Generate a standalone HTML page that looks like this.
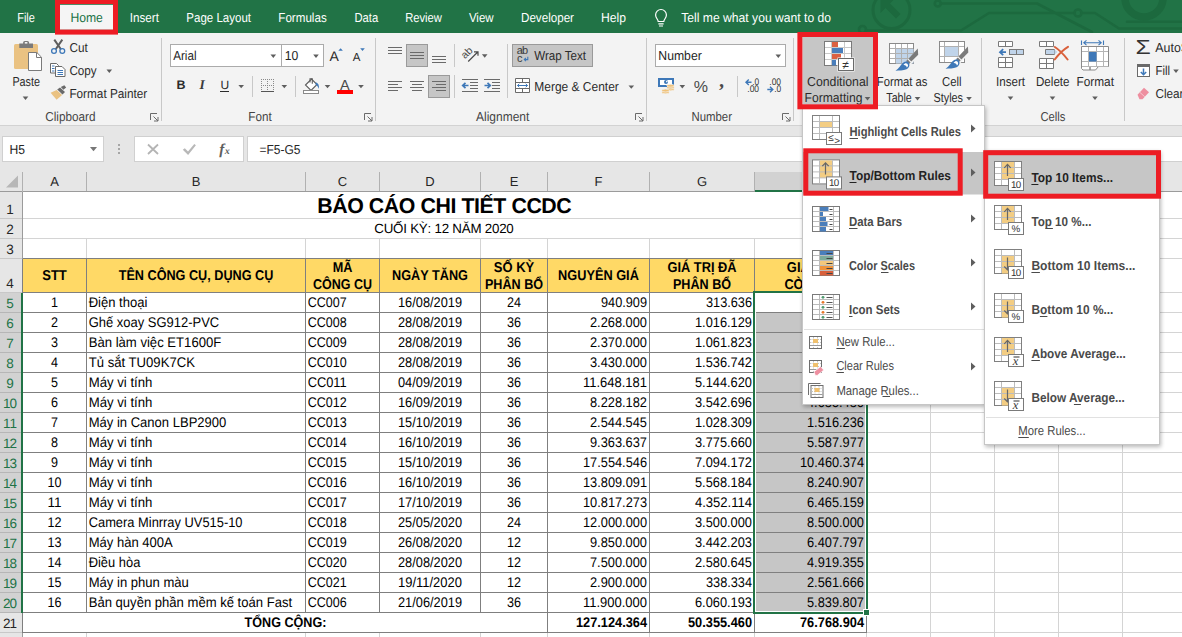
<!DOCTYPE html>
<html lang="vi"><head><meta charset="utf-8"><title>Excel - Conditional Formatting - Top 10 Items</title>
<style>
html,body{margin:0;padding:0;background:#fff;}
body{width:1182px;height:637px;overflow:hidden;font-family:"Liberation Sans",sans-serif;}
svg{display:block;}
svg text{white-space:pre;}
</style></head><body>
<svg width="1182" height="637" viewBox="0 0 1182 637" font-family="'Liberation Sans', sans-serif" text-rendering="geometricPrecision" role="img" aria-label="Excel worksheet with Conditional Formatting menu">
<g id="sheet">
<rect x="0" y="171" width="1182" height="466" fill="#ffffff"/>
<rect x="0" y="162" width="1182" height="30" fill="#e6e6e6"/>
<rect x="23" y="218" width="1159" height="1" fill="#d4d4d4"/>
<rect x="23" y="238" width="1159" height="1" fill="#d4d4d4"/>
<rect x="23" y="258" width="1159" height="1" fill="#d4d4d4"/>
<rect x="23" y="292" width="1159" height="1" fill="#d4d4d4"/>
<rect x="23" y="312" width="1159" height="1" fill="#d4d4d4"/>
<rect x="23" y="332" width="1159" height="1" fill="#d4d4d4"/>
<rect x="23" y="352" width="1159" height="1" fill="#d4d4d4"/>
<rect x="23" y="372" width="1159" height="1" fill="#d4d4d4"/>
<rect x="23" y="392" width="1159" height="1" fill="#d4d4d4"/>
<rect x="23" y="412" width="1159" height="1" fill="#d4d4d4"/>
<rect x="23" y="432" width="1159" height="1" fill="#d4d4d4"/>
<rect x="23" y="452" width="1159" height="1" fill="#d4d4d4"/>
<rect x="23" y="472" width="1159" height="1" fill="#d4d4d4"/>
<rect x="23" y="492" width="1159" height="1" fill="#d4d4d4"/>
<rect x="23" y="512" width="1159" height="1" fill="#d4d4d4"/>
<rect x="23" y="532" width="1159" height="1" fill="#d4d4d4"/>
<rect x="23" y="552" width="1159" height="1" fill="#d4d4d4"/>
<rect x="23" y="572" width="1159" height="1" fill="#d4d4d4"/>
<rect x="23" y="592" width="1159" height="1" fill="#d4d4d4"/>
<rect x="23" y="612" width="1159" height="1" fill="#d4d4d4"/>
<rect x="23" y="632" width="1159" height="1" fill="#d4d4d4"/>
<rect x="86" y="192" width="1" height="445" fill="#d4d4d4"/>
<rect x="305" y="192" width="1" height="445" fill="#d4d4d4"/>
<rect x="379" y="192" width="1" height="445" fill="#d4d4d4"/>
<rect x="480" y="192" width="1" height="445" fill="#d4d4d4"/>
<rect x="547" y="192" width="1" height="445" fill="#d4d4d4"/>
<rect x="649" y="192" width="1" height="445" fill="#d4d4d4"/>
<rect x="754" y="192" width="1" height="445" fill="#d4d4d4"/>
<rect x="866" y="192" width="1" height="445" fill="#d4d4d4"/>
<rect x="930" y="192" width="1" height="445" fill="#d4d4d4"/>
<rect x="994" y="192" width="1" height="445" fill="#d4d4d4"/>
<rect x="1058" y="192" width="1" height="445" fill="#d4d4d4"/>
<rect x="1122" y="192" width="1" height="445" fill="#d4d4d4"/>
<rect x="23" y="192" width="843" height="26" fill="#fff"/>
<rect x="23" y="219" width="843" height="19" fill="#fff"/>
<rect x="23" y="613" width="524" height="19" fill="#fff"/>
<rect x="0" y="191" width="1182" height="1" fill="#9b9b9b"/>
<rect x="86" y="172" width="1" height="19" fill="#b1b1b1"/>
<rect x="305" y="172" width="1" height="19" fill="#b1b1b1"/>
<rect x="379" y="172" width="1" height="19" fill="#b1b1b1"/>
<rect x="480" y="172" width="1" height="19" fill="#b1b1b1"/>
<rect x="547" y="172" width="1" height="19" fill="#b1b1b1"/>
<rect x="649" y="172" width="1" height="19" fill="#b1b1b1"/>
<rect x="754" y="172" width="1" height="19" fill="#b1b1b1"/>
<rect x="866" y="172" width="1" height="19" fill="#b1b1b1"/>
<rect x="930" y="172" width="1" height="19" fill="#b1b1b1"/>
<rect x="994" y="172" width="1" height="19" fill="#b1b1b1"/>
<rect x="1058" y="172" width="1" height="19" fill="#b1b1b1"/>
<rect x="1122" y="172" width="1" height="19" fill="#b1b1b1"/>
<rect x="755" y="172" width="111" height="18" fill="#d2d2d2"/>
<rect x="755" y="190" width="112" height="2" fill="#217346"/>
<text x="54.5" y="186" font-size="13" fill="#262626" text-anchor="middle">A</text>
<text x="196" y="186" font-size="13" fill="#262626" text-anchor="middle">B</text>
<text x="342.5" y="186" font-size="13" fill="#262626" text-anchor="middle">C</text>
<text x="430" y="186" font-size="13" fill="#262626" text-anchor="middle">D</text>
<text x="514" y="186" font-size="13" fill="#262626" text-anchor="middle">E</text>
<text x="598.5" y="186" font-size="13" fill="#262626" text-anchor="middle">F</text>
<text x="702" y="186" font-size="13" fill="#262626" text-anchor="middle">G</text>
<text x="898.5" y="186" font-size="13" fill="#262626" text-anchor="middle">I</text>
<text x="962.5" y="186" font-size="13" fill="#262626" text-anchor="middle">J</text>
<text x="1026.5" y="186" font-size="13" fill="#262626" text-anchor="middle">K</text>
<text x="1090.5" y="186" font-size="13" fill="#262626" text-anchor="middle">L</text>
<text x="1154.5" y="186" font-size="13" fill="#262626" text-anchor="middle">M</text>
<rect x="22" y="172" width="1" height="20" fill="#b1b1b1"/>
<path d="M18 175.5V187.5H6z" fill="#b7b7b7"/>
<rect x="0" y="192" width="22" height="445" fill="#e6e6e6"/>
<rect x="22" y="192" width="1" height="445" fill="#9b9b9b"/>
<rect x="0" y="218" width="22" height="1" fill="#c8c8c8"/>
<rect x="0" y="238" width="22" height="1" fill="#c8c8c8"/>
<rect x="0" y="258" width="22" height="1" fill="#c8c8c8"/>
<rect x="0" y="292" width="22" height="1" fill="#c8c8c8"/>
<rect x="0" y="312" width="22" height="1" fill="#c8c8c8"/>
<rect x="0" y="332" width="22" height="1" fill="#c8c8c8"/>
<rect x="0" y="352" width="22" height="1" fill="#c8c8c8"/>
<rect x="0" y="372" width="22" height="1" fill="#c8c8c8"/>
<rect x="0" y="392" width="22" height="1" fill="#c8c8c8"/>
<rect x="0" y="412" width="22" height="1" fill="#c8c8c8"/>
<rect x="0" y="432" width="22" height="1" fill="#c8c8c8"/>
<rect x="0" y="452" width="22" height="1" fill="#c8c8c8"/>
<rect x="0" y="472" width="22" height="1" fill="#c8c8c8"/>
<rect x="0" y="492" width="22" height="1" fill="#c8c8c8"/>
<rect x="0" y="512" width="22" height="1" fill="#c8c8c8"/>
<rect x="0" y="532" width="22" height="1" fill="#c8c8c8"/>
<rect x="0" y="552" width="22" height="1" fill="#c8c8c8"/>
<rect x="0" y="572" width="22" height="1" fill="#c8c8c8"/>
<rect x="0" y="592" width="22" height="1" fill="#c8c8c8"/>
<rect x="0" y="612" width="22" height="1" fill="#c8c8c8"/>
<rect x="0" y="632" width="22" height="1" fill="#c8c8c8"/>
<rect x="0" y="293" width="21" height="319" fill="#d2d2d2"/>
<rect x="0" y="312" width="21" height="1" fill="#b6b6b6"/>
<rect x="0" y="332" width="21" height="1" fill="#b6b6b6"/>
<rect x="0" y="352" width="21" height="1" fill="#b6b6b6"/>
<rect x="0" y="372" width="21" height="1" fill="#b6b6b6"/>
<rect x="0" y="392" width="21" height="1" fill="#b6b6b6"/>
<rect x="0" y="412" width="21" height="1" fill="#b6b6b6"/>
<rect x="0" y="432" width="21" height="1" fill="#b6b6b6"/>
<rect x="0" y="452" width="21" height="1" fill="#b6b6b6"/>
<rect x="0" y="472" width="21" height="1" fill="#b6b6b6"/>
<rect x="0" y="492" width="21" height="1" fill="#b6b6b6"/>
<rect x="0" y="512" width="21" height="1" fill="#b6b6b6"/>
<rect x="0" y="532" width="21" height="1" fill="#b6b6b6"/>
<rect x="0" y="552" width="21" height="1" fill="#b6b6b6"/>
<rect x="0" y="572" width="21" height="1" fill="#b6b6b6"/>
<rect x="0" y="592" width="21" height="1" fill="#b6b6b6"/>
<rect x="0" y="612" width="21" height="1" fill="#b6b6b6"/>
<rect x="21" y="293" width="2" height="320" fill="#217346"/>
<text x="9.9" y="214" font-size="13.5" fill="#262626" text-anchor="middle">1</text>
<text x="9.9" y="234" font-size="13.5" fill="#262626" text-anchor="middle">2</text>
<text x="9.9" y="254" font-size="13.5" fill="#262626" text-anchor="middle">3</text>
<text x="9.9" y="288" font-size="13.5" fill="#262626" text-anchor="middle">4</text>
<text x="9.9" y="308" font-size="13.5" fill="#217346" text-anchor="middle">5</text>
<text x="9.9" y="328" font-size="13.5" fill="#217346" text-anchor="middle">6</text>
<text x="9.9" y="348" font-size="13.5" fill="#217346" text-anchor="middle">7</text>
<text x="9.9" y="368" font-size="13.5" fill="#217346" text-anchor="middle">8</text>
<text x="9.9" y="388" font-size="13.5" fill="#217346" text-anchor="middle">9</text>
<text x="9.9" y="408" font-size="13.5" fill="#217346" text-anchor="middle" textLength="14" lengthAdjust="spacing">10</text>
<text x="9.9" y="428" font-size="13.5" fill="#217346" text-anchor="middle" textLength="14" lengthAdjust="spacing">11</text>
<text x="9.9" y="448" font-size="13.5" fill="#217346" text-anchor="middle" textLength="14" lengthAdjust="spacing">12</text>
<text x="9.9" y="468" font-size="13.5" fill="#217346" text-anchor="middle" textLength="14" lengthAdjust="spacing">13</text>
<text x="9.9" y="488" font-size="13.5" fill="#217346" text-anchor="middle" textLength="14" lengthAdjust="spacing">14</text>
<text x="9.9" y="508" font-size="13.5" fill="#217346" text-anchor="middle" textLength="14" lengthAdjust="spacing">15</text>
<text x="9.9" y="528" font-size="13.5" fill="#217346" text-anchor="middle" textLength="14" lengthAdjust="spacing">16</text>
<text x="9.9" y="548" font-size="13.5" fill="#217346" text-anchor="middle" textLength="14" lengthAdjust="spacing">17</text>
<text x="9.9" y="568" font-size="13.5" fill="#217346" text-anchor="middle" textLength="14" lengthAdjust="spacing">18</text>
<text x="9.9" y="588" font-size="13.5" fill="#217346" text-anchor="middle" textLength="14" lengthAdjust="spacing">19</text>
<text x="9.9" y="608" font-size="13.5" fill="#217346" text-anchor="middle" textLength="14" lengthAdjust="spacing">20</text>
<text x="9.9" y="628" font-size="13.5" fill="#262626" text-anchor="middle" textLength="14" lengthAdjust="spacing">21</text>
<rect x="23" y="259" width="844" height="33" fill="#ffd966"/>
<rect x="756" y="313" width="109" height="298" fill="#c6c6c6"/>
<rect x="23" y="258" width="844" height="1" fill="#7f7f7f"/>
<rect x="23" y="292" width="844" height="1" fill="#7f7f7f"/>
<rect x="23" y="312" width="844" height="1" fill="#7f7f7f"/>
<rect x="23" y="332" width="844" height="1" fill="#7f7f7f"/>
<rect x="23" y="352" width="844" height="1" fill="#7f7f7f"/>
<rect x="23" y="372" width="844" height="1" fill="#7f7f7f"/>
<rect x="23" y="392" width="844" height="1" fill="#7f7f7f"/>
<rect x="23" y="412" width="844" height="1" fill="#7f7f7f"/>
<rect x="23" y="432" width="844" height="1" fill="#7f7f7f"/>
<rect x="23" y="452" width="844" height="1" fill="#7f7f7f"/>
<rect x="23" y="472" width="844" height="1" fill="#7f7f7f"/>
<rect x="23" y="492" width="844" height="1" fill="#7f7f7f"/>
<rect x="23" y="512" width="844" height="1" fill="#7f7f7f"/>
<rect x="23" y="532" width="844" height="1" fill="#7f7f7f"/>
<rect x="23" y="552" width="844" height="1" fill="#7f7f7f"/>
<rect x="23" y="572" width="844" height="1" fill="#7f7f7f"/>
<rect x="23" y="592" width="844" height="1" fill="#7f7f7f"/>
<rect x="23" y="612" width="844" height="1" fill="#7f7f7f"/>
<rect x="23" y="632" width="844" height="1" fill="#7f7f7f"/>
<rect x="86" y="259" width="1" height="354" fill="#7f7f7f"/>
<rect x="305" y="259" width="1" height="354" fill="#7f7f7f"/>
<rect x="379" y="259" width="1" height="354" fill="#7f7f7f"/>
<rect x="480" y="259" width="1" height="354" fill="#7f7f7f"/>
<rect x="547" y="259" width="1" height="354" fill="#7f7f7f"/>
<rect x="649" y="259" width="1" height="354" fill="#7f7f7f"/>
<rect x="754" y="259" width="1" height="354" fill="#7f7f7f"/>
<rect x="866" y="259" width="1" height="354" fill="#7f7f7f"/>
<rect x="547" y="613" width="1" height="20" fill="#7f7f7f"/>
<rect x="649" y="613" width="1" height="20" fill="#7f7f7f"/>
<rect x="754" y="613" width="1" height="20" fill="#7f7f7f"/>
<rect x="866" y="613" width="1" height="20" fill="#7f7f7f"/>
<rect x="22" y="259" width="1" height="374" fill="#7f7f7f"/>
<rect x="21" y="293" width="2" height="320" fill="#217346"/>
<text x="54.5" y="307" font-size="14" fill="#000" text-anchor="middle" textLength="7" lengthAdjust="spacingAndGlyphs">1</text>
<text x="88.7" y="307" font-size="14" fill="#000" textLength="58.696" lengthAdjust="spacingAndGlyphs">Điện thoại</text>
<text x="307.7" y="307" font-size="14" fill="#000" textLength="39" lengthAdjust="spacingAndGlyphs">CC007</text>
<text x="430" y="307" font-size="14" fill="#000" text-anchor="middle" textLength="64" lengthAdjust="spacingAndGlyphs">16/08/2019</text>
<text x="514" y="307" font-size="14" fill="#000" text-anchor="middle" textLength="14" lengthAdjust="spacingAndGlyphs">24</text>
<text x="647" y="307" font-size="14" fill="#000" text-anchor="end" textLength="46" lengthAdjust="spacingAndGlyphs">940.909</text>
<text x="752" y="307" font-size="14" fill="#000" text-anchor="end" textLength="46" lengthAdjust="spacingAndGlyphs">313.636</text>
<text x="864" y="307" font-size="14" fill="#000" text-anchor="end" textLength="46" lengthAdjust="spacingAndGlyphs">627.273</text>
<text x="54.5" y="327" font-size="14" fill="#000" text-anchor="middle" textLength="7" lengthAdjust="spacingAndGlyphs">2</text>
<text x="88.7" y="327" font-size="14" fill="#000" textLength="130.548" lengthAdjust="spacingAndGlyphs">Ghế xoay SG912-PVC</text>
<text x="307.7" y="327" font-size="14" fill="#000" textLength="39" lengthAdjust="spacingAndGlyphs">CC008</text>
<text x="430" y="327" font-size="14" fill="#000" text-anchor="middle" textLength="64" lengthAdjust="spacingAndGlyphs">28/08/2019</text>
<text x="514" y="327" font-size="14" fill="#000" text-anchor="middle" textLength="14" lengthAdjust="spacingAndGlyphs">36</text>
<text x="647" y="327" font-size="14" fill="#000" text-anchor="end" textLength="57" lengthAdjust="spacingAndGlyphs">2.268.000</text>
<text x="752" y="327" font-size="14" fill="#000" text-anchor="end" textLength="57" lengthAdjust="spacingAndGlyphs">1.016.129</text>
<text x="864" y="327" font-size="14" fill="#000" text-anchor="end" textLength="57" lengthAdjust="spacingAndGlyphs">1.251.871</text>
<text x="54.5" y="347" font-size="14" fill="#000" text-anchor="middle" textLength="7" lengthAdjust="spacingAndGlyphs">3</text>
<text x="88.7" y="347" font-size="14" fill="#000" textLength="132.572" lengthAdjust="spacingAndGlyphs">Bàn làm việc ET1600F</text>
<text x="307.7" y="347" font-size="14" fill="#000" textLength="39" lengthAdjust="spacingAndGlyphs">CC009</text>
<text x="430" y="347" font-size="14" fill="#000" text-anchor="middle" textLength="64" lengthAdjust="spacingAndGlyphs">28/08/2019</text>
<text x="514" y="347" font-size="14" fill="#000" text-anchor="middle" textLength="14" lengthAdjust="spacingAndGlyphs">36</text>
<text x="647" y="347" font-size="14" fill="#000" text-anchor="end" textLength="57" lengthAdjust="spacingAndGlyphs">2.370.000</text>
<text x="752" y="347" font-size="14" fill="#000" text-anchor="end" textLength="57" lengthAdjust="spacingAndGlyphs">1.061.823</text>
<text x="864" y="347" font-size="14" fill="#000" text-anchor="end" textLength="57" lengthAdjust="spacingAndGlyphs">1.308.177</text>
<text x="54.5" y="367" font-size="14" fill="#000" text-anchor="middle" textLength="7" lengthAdjust="spacingAndGlyphs">4</text>
<text x="88.7" y="367" font-size="14" fill="#000" textLength="106.26" lengthAdjust="spacingAndGlyphs">Tủ sắt TU09K7CK</text>
<text x="307.7" y="367" font-size="14" fill="#000" textLength="39" lengthAdjust="spacingAndGlyphs">CC010</text>
<text x="430" y="367" font-size="14" fill="#000" text-anchor="middle" textLength="64" lengthAdjust="spacingAndGlyphs">28/08/2019</text>
<text x="514" y="367" font-size="14" fill="#000" text-anchor="middle" textLength="14" lengthAdjust="spacingAndGlyphs">36</text>
<text x="647" y="367" font-size="14" fill="#000" text-anchor="end" textLength="57" lengthAdjust="spacingAndGlyphs">3.430.000</text>
<text x="752" y="367" font-size="14" fill="#000" text-anchor="end" textLength="57" lengthAdjust="spacingAndGlyphs">1.536.742</text>
<text x="864" y="367" font-size="14" fill="#000" text-anchor="end" textLength="57" lengthAdjust="spacingAndGlyphs">1.893.258</text>
<text x="54.5" y="387" font-size="14" fill="#000" text-anchor="middle" textLength="7" lengthAdjust="spacingAndGlyphs">5</text>
<text x="88.7" y="387" font-size="14" fill="#000" textLength="63.756" lengthAdjust="spacingAndGlyphs">Máy vi tính</text>
<text x="307.7" y="387" font-size="14" fill="#000" textLength="39" lengthAdjust="spacingAndGlyphs">CC011</text>
<text x="430" y="387" font-size="14" fill="#000" text-anchor="middle" textLength="64" lengthAdjust="spacingAndGlyphs">04/09/2019</text>
<text x="514" y="387" font-size="14" fill="#000" text-anchor="middle" textLength="14" lengthAdjust="spacingAndGlyphs">36</text>
<text x="647" y="387" font-size="14" fill="#000" text-anchor="end" textLength="64" lengthAdjust="spacingAndGlyphs">11.648.181</text>
<text x="752" y="387" font-size="14" fill="#000" text-anchor="end" textLength="57" lengthAdjust="spacingAndGlyphs">5.144.620</text>
<text x="864" y="387" font-size="14" fill="#000" text-anchor="end" textLength="57" lengthAdjust="spacingAndGlyphs">6.503.561</text>
<text x="54.5" y="407" font-size="14" fill="#000" text-anchor="middle" textLength="7" lengthAdjust="spacingAndGlyphs">6</text>
<text x="88.7" y="407" font-size="14" fill="#000" textLength="63.756" lengthAdjust="spacingAndGlyphs">Máy vi tính</text>
<text x="307.7" y="407" font-size="14" fill="#000" textLength="39" lengthAdjust="spacingAndGlyphs">CC012</text>
<text x="430" y="407" font-size="14" fill="#000" text-anchor="middle" textLength="64" lengthAdjust="spacingAndGlyphs">16/09/2019</text>
<text x="514" y="407" font-size="14" fill="#000" text-anchor="middle" textLength="14" lengthAdjust="spacingAndGlyphs">36</text>
<text x="647" y="407" font-size="14" fill="#000" text-anchor="end" textLength="57" lengthAdjust="spacingAndGlyphs">8.228.182</text>
<text x="752" y="407" font-size="14" fill="#000" text-anchor="end" textLength="57" lengthAdjust="spacingAndGlyphs">3.542.696</text>
<text x="864" y="407" font-size="14" fill="#000" text-anchor="end" textLength="57" lengthAdjust="spacingAndGlyphs">4.685.486</text>
<text x="54.5" y="427" font-size="14" fill="#000" text-anchor="middle" textLength="7" lengthAdjust="spacingAndGlyphs">7</text>
<text x="88.7" y="427" font-size="14" fill="#000" textLength="137.632" lengthAdjust="spacingAndGlyphs">Máy in Canon LBP2900</text>
<text x="307.7" y="427" font-size="14" fill="#000" textLength="39" lengthAdjust="spacingAndGlyphs">CC013</text>
<text x="430" y="427" font-size="14" fill="#000" text-anchor="middle" textLength="64" lengthAdjust="spacingAndGlyphs">15/10/2019</text>
<text x="514" y="427" font-size="14" fill="#000" text-anchor="middle" textLength="14" lengthAdjust="spacingAndGlyphs">36</text>
<text x="647" y="427" font-size="14" fill="#000" text-anchor="end" textLength="57" lengthAdjust="spacingAndGlyphs">2.544.545</text>
<text x="752" y="427" font-size="14" fill="#000" text-anchor="end" textLength="57" lengthAdjust="spacingAndGlyphs">1.028.309</text>
<text x="864" y="427" font-size="14" fill="#000" text-anchor="end" textLength="57" lengthAdjust="spacingAndGlyphs">1.516.236</text>
<text x="54.5" y="447" font-size="14" fill="#000" text-anchor="middle" textLength="7" lengthAdjust="spacingAndGlyphs">8</text>
<text x="88.7" y="447" font-size="14" fill="#000" textLength="63.756" lengthAdjust="spacingAndGlyphs">Máy vi tính</text>
<text x="307.7" y="447" font-size="14" fill="#000" textLength="39" lengthAdjust="spacingAndGlyphs">CC014</text>
<text x="430" y="447" font-size="14" fill="#000" text-anchor="middle" textLength="64" lengthAdjust="spacingAndGlyphs">16/10/2019</text>
<text x="514" y="447" font-size="14" fill="#000" text-anchor="middle" textLength="14" lengthAdjust="spacingAndGlyphs">36</text>
<text x="647" y="447" font-size="14" fill="#000" text-anchor="end" textLength="57" lengthAdjust="spacingAndGlyphs">9.363.637</text>
<text x="752" y="447" font-size="14" fill="#000" text-anchor="end" textLength="57" lengthAdjust="spacingAndGlyphs">3.775.660</text>
<text x="864" y="447" font-size="14" fill="#000" text-anchor="end" textLength="57" lengthAdjust="spacingAndGlyphs">5.587.977</text>
<text x="54.5" y="467" font-size="14" fill="#000" text-anchor="middle" textLength="7" lengthAdjust="spacingAndGlyphs">9</text>
<text x="88.7" y="467" font-size="14" fill="#000" textLength="63.756" lengthAdjust="spacingAndGlyphs">Máy vi tính</text>
<text x="307.7" y="467" font-size="14" fill="#000" textLength="39" lengthAdjust="spacingAndGlyphs">CC015</text>
<text x="430" y="467" font-size="14" fill="#000" text-anchor="middle" textLength="64" lengthAdjust="spacingAndGlyphs">15/10/2019</text>
<text x="514" y="467" font-size="14" fill="#000" text-anchor="middle" textLength="14" lengthAdjust="spacingAndGlyphs">36</text>
<text x="647" y="467" font-size="14" fill="#000" text-anchor="end" textLength="64" lengthAdjust="spacingAndGlyphs">17.554.546</text>
<text x="752" y="467" font-size="14" fill="#000" text-anchor="end" textLength="57" lengthAdjust="spacingAndGlyphs">7.094.172</text>
<text x="864" y="467" font-size="14" fill="#000" text-anchor="end" textLength="64" lengthAdjust="spacingAndGlyphs">10.460.374</text>
<text x="54.5" y="487" font-size="14" fill="#000" text-anchor="middle" textLength="14" lengthAdjust="spacingAndGlyphs">10</text>
<text x="88.7" y="487" font-size="14" fill="#000" textLength="63.756" lengthAdjust="spacingAndGlyphs">Máy vi tính</text>
<text x="307.7" y="487" font-size="14" fill="#000" textLength="39" lengthAdjust="spacingAndGlyphs">CC016</text>
<text x="430" y="487" font-size="14" fill="#000" text-anchor="middle" textLength="64" lengthAdjust="spacingAndGlyphs">16/10/2019</text>
<text x="514" y="487" font-size="14" fill="#000" text-anchor="middle" textLength="14" lengthAdjust="spacingAndGlyphs">36</text>
<text x="647" y="487" font-size="14" fill="#000" text-anchor="end" textLength="64" lengthAdjust="spacingAndGlyphs">13.809.091</text>
<text x="752" y="487" font-size="14" fill="#000" text-anchor="end" textLength="57" lengthAdjust="spacingAndGlyphs">5.568.184</text>
<text x="864" y="487" font-size="14" fill="#000" text-anchor="end" textLength="57" lengthAdjust="spacingAndGlyphs">8.240.907</text>
<text x="54.5" y="507" font-size="14" fill="#000" text-anchor="middle" textLength="14" lengthAdjust="spacingAndGlyphs">11</text>
<text x="88.7" y="507" font-size="14" fill="#000" textLength="63.756" lengthAdjust="spacingAndGlyphs">Máy vi tính</text>
<text x="307.7" y="507" font-size="14" fill="#000" textLength="39" lengthAdjust="spacingAndGlyphs">CC017</text>
<text x="430" y="507" font-size="14" fill="#000" text-anchor="middle" textLength="64" lengthAdjust="spacingAndGlyphs">17/10/2019</text>
<text x="514" y="507" font-size="14" fill="#000" text-anchor="middle" textLength="14" lengthAdjust="spacingAndGlyphs">36</text>
<text x="647" y="507" font-size="14" fill="#000" text-anchor="end" textLength="64" lengthAdjust="spacingAndGlyphs">10.817.273</text>
<text x="752" y="507" font-size="14" fill="#000" text-anchor="end" textLength="57" lengthAdjust="spacingAndGlyphs">4.352.114</text>
<text x="864" y="507" font-size="14" fill="#000" text-anchor="end" textLength="57" lengthAdjust="spacingAndGlyphs">6.465.159</text>
<text x="54.5" y="527" font-size="14" fill="#000" text-anchor="middle" textLength="14" lengthAdjust="spacingAndGlyphs">12</text>
<text x="88.7" y="527" font-size="14" fill="#000" textLength="153.824" lengthAdjust="spacingAndGlyphs">Camera Minrray UV515-10</text>
<text x="307.7" y="527" font-size="14" fill="#000" textLength="39" lengthAdjust="spacingAndGlyphs">CC018</text>
<text x="430" y="527" font-size="14" fill="#000" text-anchor="middle" textLength="64" lengthAdjust="spacingAndGlyphs">25/05/2020</text>
<text x="514" y="527" font-size="14" fill="#000" text-anchor="middle" textLength="14" lengthAdjust="spacingAndGlyphs">24</text>
<text x="647" y="527" font-size="14" fill="#000" text-anchor="end" textLength="64" lengthAdjust="spacingAndGlyphs">12.000.000</text>
<text x="752" y="527" font-size="14" fill="#000" text-anchor="end" textLength="57" lengthAdjust="spacingAndGlyphs">3.500.000</text>
<text x="864" y="527" font-size="14" fill="#000" text-anchor="end" textLength="57" lengthAdjust="spacingAndGlyphs">8.500.000</text>
<text x="54.5" y="547" font-size="14" fill="#000" text-anchor="middle" textLength="14" lengthAdjust="spacingAndGlyphs">13</text>
<text x="88.7" y="547" font-size="14" fill="#000" textLength="83.996" lengthAdjust="spacingAndGlyphs">Máy hàn 400A</text>
<text x="307.7" y="547" font-size="14" fill="#000" textLength="39" lengthAdjust="spacingAndGlyphs">CC019</text>
<text x="430" y="547" font-size="14" fill="#000" text-anchor="middle" textLength="64" lengthAdjust="spacingAndGlyphs">26/08/2020</text>
<text x="514" y="547" font-size="14" fill="#000" text-anchor="middle" textLength="14" lengthAdjust="spacingAndGlyphs">12</text>
<text x="647" y="547" font-size="14" fill="#000" text-anchor="end" textLength="57" lengthAdjust="spacingAndGlyphs">9.850.000</text>
<text x="752" y="547" font-size="14" fill="#000" text-anchor="end" textLength="57" lengthAdjust="spacingAndGlyphs">3.442.203</text>
<text x="864" y="547" font-size="14" fill="#000" text-anchor="end" textLength="57" lengthAdjust="spacingAndGlyphs">6.407.797</text>
<text x="54.5" y="567" font-size="14" fill="#000" text-anchor="middle" textLength="14" lengthAdjust="spacingAndGlyphs">14</text>
<text x="88.7" y="567" font-size="14" fill="#000" textLength="51.612" lengthAdjust="spacingAndGlyphs">Điều hòa</text>
<text x="307.7" y="567" font-size="14" fill="#000" textLength="39" lengthAdjust="spacingAndGlyphs">CC020</text>
<text x="430" y="567" font-size="14" fill="#000" text-anchor="middle" textLength="64" lengthAdjust="spacingAndGlyphs">28/08/2020</text>
<text x="514" y="567" font-size="14" fill="#000" text-anchor="middle" textLength="14" lengthAdjust="spacingAndGlyphs">12</text>
<text x="647" y="567" font-size="14" fill="#000" text-anchor="end" textLength="57" lengthAdjust="spacingAndGlyphs">7.500.000</text>
<text x="752" y="567" font-size="14" fill="#000" text-anchor="end" textLength="57" lengthAdjust="spacingAndGlyphs">2.580.645</text>
<text x="864" y="567" font-size="14" fill="#000" text-anchor="end" textLength="57" lengthAdjust="spacingAndGlyphs">4.919.355</text>
<text x="54.5" y="587" font-size="14" fill="#000" text-anchor="middle" textLength="14" lengthAdjust="spacingAndGlyphs">15</text>
<text x="88.7" y="587" font-size="14" fill="#000" textLength="100.188" lengthAdjust="spacingAndGlyphs">Máy in phun màu</text>
<text x="307.7" y="587" font-size="14" fill="#000" textLength="39" lengthAdjust="spacingAndGlyphs">CC021</text>
<text x="430" y="587" font-size="14" fill="#000" text-anchor="middle" textLength="64" lengthAdjust="spacingAndGlyphs">19/11/2020</text>
<text x="514" y="587" font-size="14" fill="#000" text-anchor="middle" textLength="14" lengthAdjust="spacingAndGlyphs">12</text>
<text x="647" y="587" font-size="14" fill="#000" text-anchor="end" textLength="57" lengthAdjust="spacingAndGlyphs">2.900.000</text>
<text x="752" y="587" font-size="14" fill="#000" text-anchor="end" textLength="46" lengthAdjust="spacingAndGlyphs">338.334</text>
<text x="864" y="587" font-size="14" fill="#000" text-anchor="end" textLength="57" lengthAdjust="spacingAndGlyphs">2.561.666</text>
<text x="54.5" y="607" font-size="14" fill="#000" text-anchor="middle" textLength="14" lengthAdjust="spacingAndGlyphs">16</text>
<text x="88.7" y="607" font-size="14" fill="#000" textLength="203.412" lengthAdjust="spacingAndGlyphs">Bản quyền phần mềm kế toán Fast</text>
<text x="307.7" y="607" font-size="14" fill="#000" textLength="39" lengthAdjust="spacingAndGlyphs">CC006</text>
<text x="430" y="607" font-size="14" fill="#000" text-anchor="middle" textLength="64" lengthAdjust="spacingAndGlyphs">21/06/2019</text>
<text x="514" y="607" font-size="14" fill="#000" text-anchor="middle" textLength="14" lengthAdjust="spacingAndGlyphs">36</text>
<text x="647" y="607" font-size="14" fill="#000" text-anchor="end" textLength="64" lengthAdjust="spacingAndGlyphs">11.900.000</text>
<text x="752" y="607" font-size="14" fill="#000" text-anchor="end" textLength="57" lengthAdjust="spacingAndGlyphs">6.060.193</text>
<text x="864" y="607" font-size="14" fill="#000" text-anchor="end" textLength="57" lengthAdjust="spacingAndGlyphs">5.839.807</text>
<text x="647" y="627" font-size="14" fill="#000" text-anchor="end" font-weight="bold" textLength="71" lengthAdjust="spacingAndGlyphs">127.124.364</text>
<text x="752" y="627" font-size="14" fill="#000" text-anchor="end" font-weight="bold" textLength="64" lengthAdjust="spacingAndGlyphs">50.355.460</text>
<text x="864" y="627" font-size="14" fill="#000" text-anchor="end" font-weight="bold" textLength="64" lengthAdjust="spacingAndGlyphs">76.768.904</text>
<text x="285.5" y="627" font-size="14" fill="#000" text-anchor="middle" font-weight="bold" textLength="81.755" lengthAdjust="spacingAndGlyphs">TỔNG CỘNG:</text>
<text x="54.5" y="280" font-size="14.2" fill="#000" text-anchor="middle" font-weight="bold" textLength="24.625" lengthAdjust="spacingAndGlyphs">STT</text>
<text x="196" y="280" font-size="14.2" fill="#000" text-anchor="middle" font-weight="bold" textLength="154.645" lengthAdjust="spacingAndGlyphs">TÊN CÔNG CỤ, DỤNG CỤ</text>
<text x="342.5" y="271.7" font-size="14.2" fill="#000" text-anchor="middle" font-weight="bold" textLength="19.7" lengthAdjust="spacingAndGlyphs">MÃ</text>
<text x="342.5" y="288.7" font-size="14.2" fill="#000" text-anchor="middle" font-weight="bold" textLength="59.1" lengthAdjust="spacingAndGlyphs">CÔNG CỤ</text>
<text x="430" y="280" font-size="14.2" fill="#000" text-anchor="middle" font-weight="bold" textLength="75.845" lengthAdjust="spacingAndGlyphs">NGÀY TĂNG</text>
<text x="514" y="271.7" font-size="14.2" fill="#000" text-anchor="middle" font-weight="bold" textLength="40.385" lengthAdjust="spacingAndGlyphs">SỐ KỲ</text>
<text x="514" y="288.7" font-size="14.2" fill="#000" text-anchor="middle" font-weight="bold" textLength="58.115" lengthAdjust="spacingAndGlyphs">PHÂN BỔ</text>
<text x="598.5" y="280" font-size="14.2" fill="#000" text-anchor="middle" font-weight="bold" textLength="80.77" lengthAdjust="spacingAndGlyphs">NGUYÊN GIÁ</text>
<text x="702" y="271.7" font-size="14.2" fill="#000" text-anchor="middle" font-weight="bold" textLength="68.95" lengthAdjust="spacingAndGlyphs">GIÁ TRỊ ĐÃ</text>
<text x="702" y="288.7" font-size="14.2" fill="#000" text-anchor="middle" font-weight="bold" textLength="58.115" lengthAdjust="spacingAndGlyphs">PHÂN BỔ</text>
<text x="810.5" y="271.7" font-size="14.2" fill="#000" text-anchor="middle" font-weight="bold" textLength="47.28" lengthAdjust="spacingAndGlyphs">GIÁ TRỊ</text>
<text x="810.5" y="288.7" font-size="14.2" fill="#000" text-anchor="middle" font-weight="bold" textLength="52.205" lengthAdjust="spacingAndGlyphs">CÒN LẠI</text>
<text x="444.5" y="212.5" font-size="21.333" fill="#000" text-anchor="middle" font-weight="bold" textLength="254.5" lengthAdjust="spacing">BÁO CÁO CHI TIẾT CCDC</text>
<text x="444" y="233.3" font-size="13.333" fill="#000" text-anchor="middle" textLength="139.5" lengthAdjust="spacing">CUỐI KỲ: 12 NĂM 2020</text>
<rect x="755" y="293" width="1" height="319" fill="#fff"/>
<rect x="865" y="293" width="1" height="319" fill="#fff"/>
<rect x="755" y="293" width="111" height="1" fill="#fff"/>
<rect x="755" y="611" width="111" height="1" fill="#fff"/>
<rect x="753" y="291" width="2" height="323" fill="#217346"/>
<rect x="866" y="291" width="2" height="318" fill="#217346"/>
<rect x="753" y="291" width="115" height="2" fill="#217346"/>
<rect x="753" y="612" width="110" height="2" fill="#217346"/>
<rect x="863" y="609" width="7" height="7" fill="#fff"/>
<rect x="864" y="610" width="5" height="5" fill="#217346"/>
</g>
<g id="tabs">
<rect x="0" y="0" width="1182" height="33" fill="#217346"/>
<g fill="none" stroke="#1c693e" stroke-width="2.600" stroke-linecap="round" stroke-linejoin="round"><circle cx="891.500" cy="10" r="18.500" stroke-width="3"/><path d="M941 3.500H1037L1092 32M866.500 30.500H961L989 13H1074M1082 13H1095L1119 28.500H1182M1127 21.700H1182"/><circle cx="937.800" cy="3.500" r="3"/><circle cx="1078" cy="13" r="3.500"/><circle cx="862.500" cy="29.500" r="3.500"/><circle cx="1144" cy="-2" r="19" stroke-width="7.500"/></g>
<path d="M880.500 -1h14l-4.500 4.500 10.500 10.500-4.500 4.500-10.500-10.500-5 5z" fill="#1c693e"/>
<g fill="none" stroke="#fff" stroke-width="1.2"><path d="M658.2 21.5c0-2-2.6-3.4-2.6-6.6a5.4 5.4 0 0 1 10.8 0c0 3.2-2.6 4.6-2.6 6.600z"/><path d="M658.4 23.8h5.2M659 26h4"/></g>
</g>
<g id="ribbon">
<rect x="0" y="33" width="1182" height="92" fill="#f3f3f3"/>
<rect x="0" y="125" width="1182" height="1" fill="#d2d2d2"/>
<rect x="0" y="126" width="1182" height="36" fill="#e6e6e6"/>
<rect x="161" y="38" width="1" height="83" fill="#c8c8c8"/>
<rect x="375" y="38" width="1" height="83" fill="#c8c8c8"/>
<rect x="646" y="38" width="1" height="83" fill="#c8c8c8"/>
<rect x="793" y="38" width="1" height="83" fill="#c8c8c8"/>
<rect x="981" y="38" width="1" height="83" fill="#c8c8c8"/>
<rect x="1124" y="38" width="1" height="83" fill="#c8c8c8"/>
<text x="45.2" y="120.6" font-size="13" fill="#444444" textLength="50.3" lengthAdjust="spacingAndGlyphs">Clipboard</text>
<path d="M150.5 120.0V113.5H157.0M153.5 116.5L158.0 121.0M158.0 117.0V121.0H154.0" fill="none" stroke="#6a6a6a" stroke-width="1"/>
<text x="248.3" y="120.6" font-size="13" fill="#444444" textLength="23.4" lengthAdjust="spacingAndGlyphs">Font</text>
<path d="M364.5 120.0V113.5H371.0M367.5 116.5L372.0 121.0M372.0 117.0V121.0H368.0" fill="none" stroke="#6a6a6a" stroke-width="1"/>
<text x="476" y="120.6" font-size="13" fill="#444444" textLength="53.3" lengthAdjust="spacingAndGlyphs">Alignment</text>
<path d="M635.5 120.0V113.5H642.0M638.5 116.5L643.0 121.0M643.0 117.0V121.0H639.0" fill="none" stroke="#6a6a6a" stroke-width="1"/>
<text x="691.5" y="120.6" font-size="13" fill="#444444" textLength="40.5" lengthAdjust="spacingAndGlyphs">Number</text>
<path d="M782.5 120.0V113.5H789.0M785.5 116.5L790.0 121.0M790.0 117.0V121.0H786.0" fill="none" stroke="#6a6a6a" stroke-width="1"/>
<text x="1040.5" y="120.6" font-size="13" fill="#444444" textLength="25" lengthAdjust="spacingAndGlyphs">Cells</text>
<g><rect x="14" y="44" width="24" height="25" rx="1.500" fill="#eac282"/><path d="M19.300 48v-4.600h3.800v-.8a1.600 1.600 0 0 1 1.600-1.600h2.800a1.600 1.600 0 0 1 1.600 1.600v.8h3.900v4.600z" fill="#7a7a7a"/><rect x="24.800" y="42" width="2.600" height="1.600" fill="#f3f3f3"/><path d="M28.500 52.500h8.300l4.700 4.700v13.300h-13z" fill="#fff" stroke="#7a7a7a" stroke-width="1"/><path d="M36.500 52.700v4.800h4.800" fill="none" stroke="#7a7a7a" stroke-width="1"/></g>
<text x="12.4" y="85.8" font-size="13" fill="#2b2b2b" textLength="27.6" lengthAdjust="spacingAndGlyphs">Paste</text>
<path d="M22.7 96.6h5.6l-2.8 3.4z" fill="#5e5e5e"/>
<g fill="none" stroke-width="1.3"><path d="M54.300 39.600l6.600 9.600M62.300 39.600l-6.600 9.600" stroke="#5e5e5e" stroke-width="2"/><circle cx="54" cy="51" r="2.400" stroke="#3e78b8"/><circle cx="62.300" cy="51" r="2.400" stroke="#3e78b8"/></g>
<text x="69.4" y="51.6" font-size="13" fill="#2b2b2b" textLength="18.3" lengthAdjust="spacingAndGlyphs">Cut</text>
<g fill="#fff" stroke="#6a6a6a" stroke-width="1"><path d="M50.5 63.500h6l2 2v7.500h-8z"/><path d="M55.5 66.500h6.500l3 3v7h-9.500z"/></g><path d="M52 66h2.500M52 68.500h2.500M52 71h2.500" stroke="#3e78b8" stroke-width="1"/><path d="M57.500 70.500h5.500M57.500 72.500h5.500M57.500 74.500h5.500" stroke="#3e78b8" stroke-width="1"/>
<text x="69.4" y="75.2" font-size="13" fill="#2b2b2b" textLength="27.3" lengthAdjust="spacingAndGlyphs">Copy</text>
<path d="M106.5 69.5h5.6l-2.8 3.4z" fill="#5e5e5e"/>
<g><path d="M50.600 92.700l6-2.700 5.500 4.900-5.500 4.900z" fill="#eac282"/><path d="M57.200 89.400l2.800-1.900 5 4.500-2.500 2.500z" fill="#6a6a6a"/><path d="M60.800 86.900l3.500-1.600 1.900 2.200-2.800 2.200z" fill="#6a6a6a"/></g>
<text x="69.4" y="97.7" font-size="13" fill="#2b2b2b" textLength="77.8" lengthAdjust="spacingAndGlyphs">Format Painter</text>
<rect x="170.5" y="44.5" width="111" height="22" fill="#fff" stroke="#ababab" stroke-width="1"/>
<rect x="281.5" y="44.5" width="42" height="22" fill="#fff" stroke="#ababab" stroke-width="1"/>
<text x="173.2" y="59.9" font-size="13" fill="#262626" textLength="23.3" lengthAdjust="spacingAndGlyphs">Arial</text>
<path d="M270.5 54.6h5.6l-2.8 3.4z" fill="#5e5e5e"/>
<text x="284.8" y="59.9" font-size="13" fill="#262626" textLength="13.6" lengthAdjust="spacingAndGlyphs">10</text>
<path d="M313.2 54.6h5.6l-2.8 3.4z" fill="#5e5e5e"/>
<text x="329.6" y="60.5" font-size="14" fill="#2b2b2b" >A</text>
<path d="M338.300 50.800l2.300-2.600 2.300 2.600z" fill="#3e78b8"/>
<text x="352.8" y="60.5" font-size="11.5" fill="#2b2b2b" >A</text>
<path d="M360.200 48.300h4.600l-2.300 2.600z" fill="#3e78b8"/>
<text x="176.5" y="89.4" font-size="12.5" fill="#2b2b2b" font-weight="bold">B</text>
<text x="199.5" y="89.4" font-size="13.5" fill="#3a3a3a" font-weight="bold" font-style="italic" font-family="'Liberation Serif', serif">I</text>
<text x="220.4" y="89.2" font-size="12" fill="#2b2b2b" >U</text>
<rect x="220" y="91" width="9" height="1" fill="#2b2b2b"/>
<path d="M238.4 84.9h5.6l-2.8 3.4z" fill="#5e5e5e"/>
<rect x="252" y="76" width="1" height="21" fill="#c8c8c8"/>
<g stroke="#8a8a8a" stroke-width="1" stroke-dasharray="1 1" fill="none"><path d="M261 79.500h13M261 85.500h13M261.500 79v12M267.500 79v12M273.500 79v12"/></g>
<rect x="261" y="91" width="13" height="1" fill="#555"/>
<path d="M281.5 84.9h5.6l-2.8 3.4z" fill="#5e5e5e"/>
<rect x="295" y="76" width="1" height="21" fill="#c8c8c8"/>
<g fill="none" stroke="#5e5e5e" stroke-width="1.100"><path d="M305.500 85l6-6 5.500 5.500-6 6z" fill="#fff"/><path d="M310 82.500v-3.700h2.300v5"/></g><path d="M315.800 82.300c2.600.8 3.600 3.200 3 6.600-.8-2-1.600-3.200-3.300-4.300z" fill="#3e78b8"/>
<rect x="303.5" y="90.5" width="15" height="3" fill="#fff" stroke="#8a8a8a" stroke-width="1"/>
<path d="M324.7 84.9h5.6l-2.8 3.4z" fill="#5e5e5e"/>
<text x="340" y="90.3" font-size="14.5" fill="#4a4a4a" >A</text>
<rect x="337" y="90" width="16" height="4" fill="#ff0000"/>
<path d="M358.2 84.9h5.6l-2.8 3.4z" fill="#5e5e5e"/>
<rect x="388" y="47" width="14" height="1" fill="#6a6a6a"/>
<rect x="388" y="50" width="14" height="1" fill="#6a6a6a"/>
<rect x="388" y="53" width="14" height="1" fill="#6a6a6a"/>
<rect x="406.5" y="44.5" width="21" height="22" fill="#c6c6c6" stroke="#9a9a9a" stroke-width="1"/>
<rect x="410" y="52" width="14" height="1" fill="#6a6a6a"/>
<rect x="410" y="55" width="14" height="1" fill="#6a6a6a"/>
<rect x="410" y="58" width="14" height="1" fill="#6a6a6a"/>
<rect x="432" y="56" width="14" height="1" fill="#6a6a6a"/>
<rect x="432" y="59" width="14" height="1" fill="#6a6a6a"/>
<rect x="432" y="62" width="14" height="1" fill="#6a6a6a"/>
<rect x="454" y="44" width="1" height="23" fill="#c8c8c8"/>
<g transform="translate(465 59.300) rotate(-45)"><text x="0" y="0" font-size="10.5" fill="#4a4a4a">ab</text></g>
<path d="M468.200 61.500l9.800-9.700M474 51.800h4v4" fill="none" stroke="#4a4a4a" stroke-width="1.2"/>
<path d="M481.9 54.3h5.6l-2.8 3.4z" fill="#5e5e5e"/>
<rect x="507" y="44" width="1" height="54" fill="#c8c8c8"/>
<rect x="512.5" y="44.5" width="80" height="22" fill="#c6c6c6" stroke="#9a9a9a" stroke-width="1"/>
<text x="516.8" y="54.2" font-size="11" fill="#3a3a3a" textLength="11.2" lengthAdjust="spacing">ab</text>
<text x="517" y="62" font-size="11" fill="#3a3a3a" >c</text>
<path d="M527.800 56.800v2.800h-3.300M525.900 58l-1.600 1.600 1.600 1.600" fill="none" stroke="#3e78b8" stroke-width="1.1"/>
<text x="534.3" y="60" font-size="13" fill="#2b2b2b" textLength="51.7" lengthAdjust="spacingAndGlyphs">Wrap Text</text>
<rect x="388" y="81" width="14" height="1" fill="#6a6a6a"/>
<rect x="388" y="84" width="10" height="1" fill="#6a6a6a"/>
<rect x="388" y="87" width="14" height="1" fill="#6a6a6a"/>
<rect x="388" y="90" width="10" height="1" fill="#6a6a6a"/>
<rect x="410" y="81" width="14" height="1" fill="#6a6a6a"/>
<rect x="412" y="84" width="10" height="1" fill="#6a6a6a"/>
<rect x="410" y="87" width="14" height="1" fill="#6a6a6a"/>
<rect x="412" y="90" width="10" height="1" fill="#6a6a6a"/>
<rect x="428.5" y="75.5" width="21" height="22" fill="#c6c6c6" stroke="#9a9a9a" stroke-width="1"/>
<rect x="432" y="81" width="14" height="1" fill="#6a6a6a"/>
<rect x="436" y="84" width="10" height="1" fill="#6a6a6a"/>
<rect x="432" y="87" width="14" height="1" fill="#6a6a6a"/>
<rect x="436" y="90" width="10" height="1" fill="#6a6a6a"/>
<rect x="454" y="75" width="1" height="23" fill="#c8c8c8"/>
<rect x="462" y="79" width="16" height="1" fill="#6a6a6a"/>
<rect x="470" y="82" width="8" height="1" fill="#6a6a6a"/>
<rect x="470" y="85" width="8" height="1" fill="#6a6a6a"/>
<rect x="470" y="88" width="8" height="1" fill="#6a6a6a"/>
<rect x="462" y="91" width="16" height="1" fill="#6a6a6a"/>
<rect x="484" y="79" width="16" height="1" fill="#6a6a6a"/>
<rect x="492" y="82" width="8" height="1" fill="#6a6a6a"/>
<rect x="492" y="85" width="8" height="1" fill="#6a6a6a"/>
<rect x="492" y="88" width="8" height="1" fill="#6a6a6a"/>
<rect x="484" y="91" width="16" height="1" fill="#6a6a6a"/>
<path d="M468.500 85.500h-5.500M465.500 82.800l-2.800 2.700 2.800 2.700" fill="none" stroke="#3e78b8" stroke-width="1.7"/>
<path d="M484.500 85.500h5.500M487.500 82.800l2.800 2.700-2.800 2.700" fill="none" stroke="#3e78b8" stroke-width="1.7"/>
<g fill="#fff" stroke="#6a6a6a" stroke-width="1"><path d="M515.500 78.500h14v14h-14z"/><path d="M515.500 82.500h14M515.500 88.500h14M522.500 78.500v4M522.500 88.500v4" fill="none"/></g>
<path d="M517.500 85.500h10M519.300 83.800l-1.800 1.700 1.800 1.700M525.700 83.800l1.800 1.700-1.800 1.700" fill="none" stroke="#3e78b8" stroke-width="1"/>
<text x="534.3" y="90.6" font-size="13" fill="#2b2b2b" textLength="84.5" lengthAdjust="spacingAndGlyphs">Merge &amp; Center</text>
<path d="M628.5 85.4h5.6l-2.8 3.4z" fill="#5e5e5e"/>
<rect x="655.5" y="44.5" width="130" height="22" fill="#fff" stroke="#ababab" stroke-width="1"/>
<text x="658.3" y="59.9" font-size="13" fill="#262626" textLength="43.5" lengthAdjust="spacingAndGlyphs">Number</text>
<path d="M775.5 54.6h5.6l-2.8 3.4z" fill="#5e5e5e"/>
<g><rect x="659" y="79" width="14" height="7" fill="#fff" stroke="#3e78b8" stroke-width="2"/><circle cx="666" cy="82" r="2" fill="#3e78b8"/><circle cx="666.800" cy="81.600" r=".8" fill="#fff"/><g fill="#f0c27a" stroke="#f3f3f3" stroke-width=".7"><ellipse cx="670.500" cy="89.300" rx="3.700" ry="1.500"/><ellipse cx="670.500" cy="87.500" rx="3.700" ry="1.500"/><ellipse cx="670.500" cy="85.700" rx="3.700" ry="1.500"/><ellipse cx="665.500" cy="92.300" rx="3.700" ry="1.500"/><ellipse cx="665.500" cy="90.500" rx="3.700" ry="1.500"/></g></g>
<path d="M679.5 85.1h5.6l-2.8 3.4z" fill="#5e5e5e"/>
<text x="693.8" y="91.9" font-size="16" fill="#4a4a4a" textLength="13" lengthAdjust="spacing">%</text>
<text x="719" y="86.5" font-size="20" fill="#4a4a4a" font-weight="bold" font-family="'Liberation Serif', serif">,</text>
<rect x="737" y="76" width="1" height="21" fill="#c8c8c8"/>
<path d="M751.500 82.300h-5.500M748.800 79.600l-2.800 2.700 2.800 2.700" fill="none" stroke="#3e78b8" stroke-width="1.4"/>
<text x="752.3" y="84.6" font-size="9.5" fill="#333" textLength="7" lengthAdjust="spacingAndGlyphs">.0</text>
<text x="747.3" y="91.8" font-size="9.5" fill="#333" textLength="11.8" lengthAdjust="spacingAndGlyphs">.00</text>
<text x="769.3" y="84.6" font-size="9.5" fill="#333" textLength="11.8" lengthAdjust="spacingAndGlyphs">.00</text>
<path d="M767.300 89.500h5.500M770 86.800l2.800 2.700-2.800 2.700" fill="none" stroke="#3e78b8" stroke-width="1.4"/>
<text x="774.3" y="91.8" font-size="9.5" fill="#333" textLength="7" lengthAdjust="spacingAndGlyphs">.0</text>
<rect x="802.5" y="37" width="70.5" height="67.3" fill="#c6c6c6"/>
<g transform="translate(824 41)"><rect x=".5" y=".5" width="27" height="24" fill="#fff" stroke="#7a7a7a" stroke-width="1"/><rect x="8" y="1" width="6" height="5.500" fill="#dc6141"/><rect x="8" y="7" width="11" height="5.500" fill="#4a7ebb"/><rect x="8" y="13" width="9" height="5.500" fill="#dc6141"/><rect x="8" y="19" width="4" height="5.500" fill="#4a7ebb"/><path d="M7.500 1v23M20.500 1v23M1 6.500h26M1 12.500h26M1 18.500h26" stroke="#c9c9c9" stroke-width="1" fill="none"/><rect x="13.500" y="16.500" width="17" height="14" fill="#fff"/><rect x="14.500" y="17.500" width="15" height="12" fill="#fff" stroke="#6a6a6a" stroke-width="1"/></g>
<text x="842.3" y="68.7" font-size="12" fill="#333" >≠</text>
<text x="807" y="86" font-size="13" fill="#2b2b2b" textLength="61.5" lengthAdjust="spacingAndGlyphs">Conditional</text>
<text x="804.5" y="102" font-size="13" fill="#2b2b2b" textLength="58" lengthAdjust="spacingAndGlyphs">Formatting</text>
<path d="M864.7 97.1h5.6l-2.8 3.4z" fill="#5e5e5e"/>
<g><rect x="889.500" y="43.500" width="24" height="20" fill="#fff" stroke="#8a8a8a" stroke-width="1"/><rect x="896" y="49" width="17.500" height="14.500" fill="#c0d4ea"/><path d="M895.500 44v19M901.500 44v19M907.500 44v19M890 48.500h23M890 53.500h23M890 58.500h23" stroke="#b0b0b0" stroke-width="1" fill="none"/><path d="M903 64.500l15.500-16.500v8l-8 9z" fill="#f3f3f3"/><path d="M917.800 48.500l.4 6.200-6.900 6.900-2.900-2.900z" fill="#7a7a7a"/><path d="M907.700 59.500l2.900 2.900-1.600 1.500-2.900-2.900z" fill="#7a7a7a"/><path d="M906 61.500c1.300-.6 2.600.6 3.200 2 .8 2.300-.4 4.700-2.700 5.800-3.300 1.600-7.400 1.200-11.100 1.500 4-2.600 5.400-6.300 8-8.300.8-.6 1.700-.8 2.600-1z" fill="#3e78b8"/><path d="M905.300 63.300c1.300-.5 2.500.5 2.700 1.800.1 1-.4 1.900-1.200 2.500-.2-1.500-1.500-2.700-3.400-2.500.5-.8 1.200-1.500 1.900-1.800z" fill="#fff"/></g>
<text x="876.8" y="86" font-size="13" fill="#2b2b2b" textLength="50.7" lengthAdjust="spacingAndGlyphs">Format as</text>
<text x="886.3" y="102" font-size="13" fill="#2b2b2b" textLength="25.5" lengthAdjust="spacingAndGlyphs">Table</text>
<path d="M914.7 97.1h5.6l-2.8 3.4z" fill="#5e5e5e"/>
<g><rect x="939.500" y="41.500" width="25" height="21" fill="#fff" stroke="#8a8a8a" stroke-width="1"/><rect x="945" y="46.500" width="13.500" height="10" fill="#c0d4ea"/><path d="M944.500 42v20M958.500 42v20M940 46.500h24M940 56.500h24" stroke="#b0b0b0" stroke-width="1" fill="none"/><path d="M953 62.400l15.500-16.500v8l-8 9z" fill="#f3f3f3"/><g transform="translate(50.100 -2.100)"><path d="M917.800 48.500l.4 6.200-6.900 6.900-2.900-2.900z" fill="#7a7a7a"/><path d="M907.700 59.500l2.900 2.900-1.600 1.500-2.900-2.900z" fill="#7a7a7a"/><path d="M906 61.500c1.300-.6 2.600.6 3.200 2 .8 2.300-.4 4.700-2.700 5.800-3.300 1.600-7.400 1.200-11.100 1.500 4-2.600 5.400-6.300 8-8.300.8-.6 1.700-.8 2.600-1z" fill="#3e78b8"/><path d="M905.300 63.300c1.300-.5 2.500.5 2.700 1.800.1 1-.4 1.900-1.200 2.500-.2-1.500-1.500-2.700-3.400-2.500.5-.8 1.200-1.500 1.900-1.800z" fill="#fff"/></g></g>
<text x="942" y="86" font-size="13" fill="#2b2b2b" textLength="19.5" lengthAdjust="spacingAndGlyphs">Cell</text>
<text x="933.5" y="102" font-size="13" fill="#2b2b2b" textLength="29.5" lengthAdjust="spacingAndGlyphs">Styles</text>
<path d="M966.2 97.1h5.6l-2.8 3.4z" fill="#5e5e5e"/>
<g fill="#fff" stroke="#7a7a7a" stroke-width="1"><path d="M998.500 41.500h14v5h-14zM1005.500 41.500v5"/><path d="M998.500 57.500h14v10h-14zM1005.500 57.500v10M998.500 62.500h14" /><rect x="1009.500" y="49.500" width="14" height="5" fill="#c0d4ea"/><path d="M1016.500 49.500v5"/></g>
<path d="M1006 52.200h-5.500M1003.200 49.200l-3.200 3 3.200 3" fill="none" stroke="#3e78b8" stroke-width="1.8"/>
<text x="996" y="86" font-size="13" fill="#2b2b2b" textLength="29" lengthAdjust="spacingAndGlyphs">Insert</text>
<path d="M1007.7 96.6h5.6l-2.8 3.4z" fill="#5e5e5e"/>
<g fill="#fff" stroke="#7a7a7a" stroke-width="1"><path d="M1039.500 41.500h14v5h-14zM1046.500 41.500v5"/><path d="M1039.500 58.500h14v10h-14zM1046.500 58.500v10M1039.500 63.500h14"/><path d="M1045.500 49.500h9v5h-9z" fill="#c0d4ea"/></g>
<path d="M1054.500 49.500l3 2.500-3 2.500z" fill="#c0d4ea"/>
<path d="M1054.800 47c4 2.500 8.500 7 12.800 12.500M1068 46.800c-5 3-9.500 7.500-13.300 12.700" fill="none" stroke="#d9603b" stroke-width="2" stroke-linecap="round"/>
<text x="1036" y="86" font-size="13" fill="#2b2b2b" textLength="33.5" lengthAdjust="spacingAndGlyphs">Delete</text>
<path d="M1049.7 96.6h5.6l-2.8 3.4z" fill="#5e5e5e"/>
<g><path d="M1081.500 40.500v4.500M1103.500 40.500v4.500M1084 42.700h17M1086.500 40.300l-2.700 2.400 2.700 2.400M1098.500 40.300l2.700 2.400-2.700 2.400" stroke="#3e78b8" stroke-width="1.100" fill="none"/><path d="M1081.500 46.500h27v20h-10l-3 3.500h-5.500v-3.500v3.500h-7l-1.500-1.500z" fill="#fff" stroke="#8a8a8a" stroke-width="1"/><path d="M1088.500 47v19.500M1096.500 47v19.500M1103.500 47v19.500M1082 51.500h26M1082 61.500h26M1082 66.500h26" stroke="#b5b5b5" stroke-width="1" fill="none"/><rect x="1089" y="52" width="7.500" height="9.500" fill="#3e78b8"/></g>
<text x="1076.5" y="86" font-size="13" fill="#2b2b2b" textLength="37.5" lengthAdjust="spacingAndGlyphs">Format</text>
<path d="M1092.2 96.6h5.6l-2.8 3.4z" fill="#5e5e5e"/>
<text x="1135.5" y="54.3" font-size="20.5" fill="#333" textLength="15.3" lengthAdjust="spacingAndGlyphs">Σ</text>
<text x="1155.3" y="52.2" font-size="13" fill="#2b2b2b" textLength="51" lengthAdjust="spacingAndGlyphs">AutoSum</text>
<g><rect x="1137.500" y="64.500" width="12" height="12" fill="#fff" stroke="#6a6a6a" stroke-width="1"/><rect x="1137" y="64" width="13" height="3" fill="#6a6a6a"/><path d="M1143.500 68.500v6M1140.800 72l2.700 2.700 2.700-2.700" stroke="#3e78b8" stroke-width="1.500" fill="none"/></g>
<text x="1155.5" y="75.2" font-size="13" fill="#2b2b2b" textLength="14.5" lengthAdjust="spacingAndGlyphs">Fill</text>
<path d="M1173.2 69.5h5.6l-2.8 3.4z" fill="#5e5e5e"/>
<path d="M1137.500 94.800l6.500-7 5 4.500-6.500 7h-3z" fill="#ee8fa0"/>
<path d="M1139.800 92.300l5 4.500" fill="none" stroke="#f7c6cf" stroke-width="1"/>
<text x="1155.5" y="97.7" font-size="13" fill="#2b2b2b" textLength="28" lengthAdjust="spacingAndGlyphs">Clear</text>
</g>
<g id="formulabar">
<rect x="2.5" y="136.5" width="101" height="25" fill="#fff" stroke="#d0d0d0" stroke-width="1"/>
<text x="9.5" y="154" font-size="13" fill="#262626" textLength="15.5" lengthAdjust="spacingAndGlyphs">H5</text>
<path d="M89.95 147.025h7.1l-3.55 4.15z" fill="#777"/>
<rect x="118" y="144" width="2" height="2" fill="#a6a6a6"/>
<rect x="118" y="148" width="2" height="2" fill="#a6a6a6"/>
<rect x="118" y="152" width="2" height="2" fill="#a6a6a6"/>
<rect x="134.5" y="136.5" width="109" height="25" fill="#fff" stroke="#d0d0d0" stroke-width="1"/>
<path d="M148 144.500l10 9.500M158 144.500l-10 9.500" fill="none" stroke="#b4b4b4" stroke-width="1.8"/>
<path d="M182.800 149.800l2 -1.600 3.200 3.300 6.300-7.500 1.600 1.300-7.800 9.700z" fill="#b8b8b8"/>
<text x="219.3" y="153.5" font-size="15" fill="#5e5e5e" font-weight="bold" font-style="italic" font-family="'Liberation Serif', serif">f</text>
<text x="224.8" y="154" font-size="10" fill="#5e5e5e" font-weight="bold" font-style="italic" font-family="'Liberation Serif', serif">x</text>
<rect x="247.5" y="136.5" width="936" height="25" fill="#fff" stroke="#d0d0d0" stroke-width="1"/>
<text x="259.5" y="154" font-size="13" fill="#262626" textLength="41" lengthAdjust="spacingAndGlyphs">=F5-G5</text>
</g>
<defs><filter id="sh" x="-10%" y="-10%" width="125%" height="125%"><feGaussianBlur in="SourceAlpha" stdDeviation="2.200"/><feOffset dx=".500" dy="1.500"/><feComponentTransfer><feFuncA type="linear" slope=".28"/></feComponentTransfer><feMerge><feMergeNode/><feMergeNode in="SourceGraphic"/></feMerge></filter></defs>
<g id="cf-menu" filter="url(#sh)">
<rect x="802.5" y="105.5" width="182" height="299" fill="#fff" stroke="#c6c6c6" stroke-width="1"/>
</g>
<g id="cf-menu-items">
<rect x="803" y="152" width="181" height="42.5" fill="#c6c6c6"/>
<g transform="translate(812 115)">
<rect x=".5" y=".5" width="27" height="24" fill="#fff" stroke="#808080" stroke-width="1"/>
<rect x="8" y="7" width="12" height="5.5" fill="#f3cd83"/>
<path d="M7.500 1v23M20.500 1v23M1 6.500h26M1 12.500h26M1 18.500h26" stroke="#bcbcbc" stroke-width="1" fill="none"/>
<rect x="14.500" y="17.500" width="15" height="12" fill="#fff" stroke="#7a7a7a" stroke-width="1"/>
<text x="16.300" y="25.500" font-size="10" fill="#333">≤</text><text x="22.300" y="28.700" font-size="10" fill="#333">&gt;</text>
</g>
<text x="849.5" y="135.5" font-size="13" fill="#4a4a4a" font-weight="bold" textLength="111.5" lengthAdjust="spacingAndGlyphs">Highlight Cells Rules</text>
<rect x="849.5" y="138" width="8.5" height="1" fill="#4a4a4a"/>
<path d="M971 124.5l4.5 4l-4.5 4z" fill="#5e5e5e"/>
<g transform="translate(812 159.4)">
<rect x=".5" y=".5" width="27" height="24" fill="#fff" stroke="#808080" stroke-width="1"/>
<rect x="8" y="1" width="12" height="17.5" fill="#f3cd83"/>
<path d="M7.500 1v23M20.500 1v23M1 6.500h26M1 12.500h26M1 18.500h26" stroke="#bcbcbc" stroke-width="1" fill="none"/>
<path d="M13.500 3.500v11.500M10.300 6.800l3.200-3.400 3.200 3.400" stroke="#666" stroke-width="1.200" fill="none"/>
<rect x="14.500" y="17.500" width="15" height="12" fill="#fff" stroke="#7a7a7a" stroke-width="1"/>
<text x="16.900" y="27" font-size="9.800" fill="#333" textLength="10.400" lengthAdjust="spacing">10</text>
</g>
<text x="849.5" y="180" font-size="13" fill="#222" font-weight="bold" textLength="101.5" lengthAdjust="spacingAndGlyphs">Top/Bottom Rules</text>
<rect x="849.5" y="182" width="7" height="1" fill="#222"/>
<path d="M971 168.5l4.5 4l-4.5 4z" fill="#5e5e5e"/>
<rect x="812.5" y="206.5" width="27" height="25" fill="#fff" stroke="#7a7a7a" stroke-width="1"/>
<rect x="820" y="207" width="8.5" height="4.5" fill="#4a7ebb"/>
<rect x="829.5" y="209" width="3" height="1" fill="#444"/>
<rect x="820" y="212" width="3" height="4.5" fill="#4a7ebb"/>
<rect x="829.5" y="214" width="3" height="1" fill="#444"/>
<rect x="820" y="217" width="6" height="4.5" fill="#4a7ebb"/>
<rect x="829.5" y="219" width="3" height="1" fill="#444"/>
<rect x="820" y="222" width="7.5" height="4.5" fill="#4a7ebb"/>
<rect x="829.5" y="224" width="3" height="1" fill="#444"/>
<rect x="820" y="227" width="6" height="4.5" fill="#4a7ebb"/>
<rect x="829.5" y="229" width="3" height="1" fill="#444"/>
<path d="M819.5 207v24M833.5 207v24M813 211.5h26M813 216.5h26M813 221.5h26M813 226.5h26" stroke="#bcbcbc" stroke-width="1" fill="none"/>
<text x="849" y="226" font-size="13" fill="#4a4a4a" font-weight="bold" textLength="53.2" lengthAdjust="spacingAndGlyphs">Data Bars</text>
<rect x="849" y="228" width="8.5" height="1" fill="#4a4a4a"/>
<path d="M971 214.5l4.5 4l-4.5 4z" fill="#5e5e5e"/>
<rect x="812.5" y="250.5" width="27" height="25" fill="#fff" stroke="#7a7a7a" stroke-width="1"/>
<rect x="820" y="251" width="13.5" height="4.5" fill="#4a7ebb"/>
<rect x="826.5" y="253" width="6" height="1" fill="#444"/>
<rect x="820" y="256" width="13.5" height="4.5" fill="#7eab9a"/>
<rect x="826.5" y="258" width="6" height="1" fill="#444"/>
<rect x="820" y="261" width="13.5" height="4.5" fill="#f4c87c"/>
<rect x="826.5" y="263" width="6" height="1" fill="#444"/>
<rect x="820" y="266" width="13.5" height="4.5" fill="#f0943c"/>
<rect x="826.5" y="268" width="6" height="1" fill="#444"/>
<rect x="820" y="271" width="13.5" height="4.5" fill="#d9603b"/>
<rect x="826.5" y="273" width="6" height="1" fill="#444"/>
<path d="M819.5 251v24M833.5 251v24M813 255.5h26M813 260.5h26M813 265.5h26M813 270.5h26" stroke="#bcbcbc" stroke-width="1" fill="none"/>
<text x="849" y="270" font-size="13" fill="#4a4a4a" font-weight="bold" textLength="66" lengthAdjust="spacingAndGlyphs">Color Scales</text>
<rect x="881" y="272" width="7.5" height="1" fill="#4a4a4a"/>
<path d="M971 258.5l4.5 4l-4.5 4z" fill="#5e5e5e"/>
<rect x="812.5" y="294.5" width="27" height="25" fill="#fff" stroke="#7a7a7a" stroke-width="1"/>
<path d="M819.5 295v24M833.5 295v24M813 299.5h26M813 304.5h26M813 309.5h26M813 314.5h26" stroke="#bcbcbc" stroke-width="1" fill="none"/>
<circle cx="823" cy="297.3" r="1.400" fill="#4e9a6f"/>
<rect x="826.5" y="297" width="6" height="1" fill="#555"/>
<circle cx="823" cy="302.3" r="1.400" fill="#e8792b"/>
<rect x="826.5" y="302" width="6" height="1" fill="#555"/>
<circle cx="823" cy="307.3" r="1.400" fill="#4e9a6f"/>
<rect x="826.5" y="307" width="6" height="1" fill="#555"/>
<circle cx="823" cy="312.3" r="1.400" fill="#e8792b"/>
<rect x="826.5" y="312" width="6" height="1" fill="#555"/>
<circle cx="823" cy="317.3" r="1.400" fill="#4e9a6f"/>
<rect x="826.5" y="317" width="6" height="1" fill="#555"/>
<text x="849" y="314" font-size="13" fill="#4a4a4a" font-weight="bold" textLength="51" lengthAdjust="spacingAndGlyphs">Icon Sets</text>
<rect x="849" y="316" width="3.5" height="1" fill="#4a4a4a"/>
<path d="M971 302.5l4.5 4l-4.5 4z" fill="#5e5e5e"/>
<rect x="804" y="329" width="180" height="1" fill="#e1e1e1"/>
<g transform="translate(809 336)"><rect x=".5" y=".5" width="12" height="12" fill="#fff" stroke="#6e6e6e" stroke-width="1"/><path d="M4.500 1v11M8.500 1v11M1 3.500h11M1 6.500h11" stroke="#c4c4c4" stroke-width="1" stroke-dasharray="1.500 1" fill="none"/><path d="M1 9.500h11" stroke="#9a9a9a" stroke-width="1" fill="none"/><rect x="4" y="3" width="5" height="4" fill="#efc06e"/></g>
<text x="836.4" y="346.3" font-size="13" fill="#4a4a4a" textLength="58.5" lengthAdjust="spacingAndGlyphs">New Rule...</text>
<rect x="836.4" y="348" width="8.5" height="1" fill="#4a4a4a"/>
<g transform="translate(809 360)"><rect x=".5" y=".5" width="12" height="12" fill="#fff" stroke="#6e6e6e" stroke-width="1"/><path d="M4.500 1v11M8.500 1v11M1 3.500h11M1 6.500h11" stroke="#c4c4c4" stroke-width="1" stroke-dasharray="1.500 1" fill="none"/><path d="M1 9.500h11" stroke="#9a9a9a" stroke-width="1" fill="none"/><rect x="4" y="3" width="5" height="4" fill="#efc06e"/></g>
<path d="M814 371.800l6.500-5.300 3.300 3.600-6.500 5.300h-2z" fill="#ee8fa0" stroke="#fff" stroke-width="0.8"/>
<text x="836.4" y="370.4" font-size="13" fill="#4a4a4a" textLength="57.5" lengthAdjust="spacingAndGlyphs">Clear Rules</text>
<rect x="836.4" y="372" width="7.5" height="1" fill="#4a4a4a"/>
<path d="M971 362.5l4.5 4l-4.5 4z" fill="#5e5e5e"/>
<path d="M808.500 395v-11.500h12" stroke="#6e6e6e" stroke-width="1" fill="none"/>
<g transform="translate(810.5 385)"><rect x=".5" y=".5" width="12" height="12" fill="#fff" stroke="#6e6e6e" stroke-width="1"/><path d="M4.500 1v11M8.500 1v11M1 3.500h11M1 6.500h11" stroke="#c4c4c4" stroke-width="1" stroke-dasharray="1.500 1" fill="none"/><path d="M1 9.500h11" stroke="#9a9a9a" stroke-width="1" fill="none"/><rect x="4" y="3" width="5" height="4" fill="#efc06e"/></g>
<text x="836.4" y="394.5" font-size="13" fill="#4a4a4a" textLength="82.4" lengthAdjust="spacingAndGlyphs">Manage Rules...</text>
<rect x="882.5" y="396" width="7.5" height="1" fill="#4a4a4a"/>
</g>
<g id="tb-submenu" filter="url(#sh)">
<rect x="984.5" y="150.5" width="175" height="294" fill="#fff" stroke="#c6c6c6" stroke-width="1"/>
</g>
<g id="tb-submenu-items">
<rect x="985" y="152" width="174" height="44" fill="#c6c6c6"/>
<g transform="translate(994 161)">
<rect x=".5" y=".5" width="27" height="24" fill="#fff" stroke="#808080" stroke-width="1"/>
<rect x="8" y="1" width="12" height="17.5" fill="#f3cd83"/>
<path d="M7.500 1v23M20.500 1v23M1 6.500h26M1 12.500h26M1 18.500h26" stroke="#bcbcbc" stroke-width="1" fill="none"/>
<path d="M13.500 3.500v11.500M10.300 6.800l3.200-3.400 3.200 3.400" stroke="#666" stroke-width="1.200" fill="none"/>
<rect x="14.500" y="17.500" width="15" height="12" fill="#fff" stroke="#7a7a7a" stroke-width="1"/>
<text x="16.900" y="27" font-size="9.800" fill="#333" textLength="10.400" lengthAdjust="spacing">10</text>
</g>
<text x="1031.4" y="181.8" font-size="13" fill="#222" font-weight="bold" textLength="81.6" lengthAdjust="spacingAndGlyphs">Top 10 Items...</text>
<rect x="1031.4" y="184" width="7" height="1" fill="#222"/>
<g transform="translate(994 205)">
<rect x=".5" y=".5" width="27" height="24" fill="#fff" stroke="#808080" stroke-width="1"/>
<rect x="8" y="1" width="12" height="17.5" fill="#f3cd83"/>
<path d="M7.500 1v23M20.500 1v23M1 6.500h26M1 12.500h26M1 18.500h26" stroke="#bcbcbc" stroke-width="1" fill="none"/>
<path d="M13.500 3.500v11.500M10.300 6.800l3.200-3.400 3.200 3.400" stroke="#666" stroke-width="1.200" fill="none"/>
<rect x="14.500" y="17.500" width="15" height="12" fill="#fff" stroke="#7a7a7a" stroke-width="1"/>
<text x="17.500" y="27" font-size="9.800" fill="#333">%</text>
</g>
<text x="1031.4" y="225.8" font-size="13" fill="#4a4a4a" font-weight="bold" textLength="60" lengthAdjust="spacingAndGlyphs">Top 10 %...</text>
<rect x="1045.4" y="228" width="7.5" height="1" fill="#4a4a4a"/>
<g transform="translate(994 249)">
<rect x=".5" y=".5" width="27" height="24" fill="#fff" stroke="#808080" stroke-width="1"/>
<rect x="8" y="7" width="12" height="17.5" fill="#f3cd83"/>
<path d="M7.500 1v23M20.500 1v23M1 6.500h26M1 12.500h26M1 18.500h26" stroke="#bcbcbc" stroke-width="1" fill="none"/>
<path d="M13.500 8.500v12.500M10.300 17.500l3.200 3.400 3.200-3.400" stroke="#666" stroke-width="1.200" fill="none"/>
<rect x="14.500" y="17.500" width="15" height="12" fill="#fff" stroke="#7a7a7a" stroke-width="1"/>
<text x="16.900" y="27" font-size="9.800" fill="#333" textLength="10.400" lengthAdjust="spacing">10</text>
</g>
<text x="1031.4" y="269.8" font-size="13" fill="#4a4a4a" font-weight="bold" textLength="104" lengthAdjust="spacingAndGlyphs">Bottom 10 Items...</text>
<rect x="1031.4" y="272" width="8.5" height="1" fill="#4a4a4a"/>
<g transform="translate(994 293)">
<rect x=".5" y=".5" width="27" height="24" fill="#fff" stroke="#808080" stroke-width="1"/>
<rect x="8" y="7" width="12" height="17.5" fill="#f3cd83"/>
<path d="M7.500 1v23M20.500 1v23M1 6.500h26M1 12.500h26M1 18.500h26" stroke="#bcbcbc" stroke-width="1" fill="none"/>
<path d="M13.500 8.500v12.500M10.300 17.500l3.200 3.400 3.200-3.400" stroke="#666" stroke-width="1.200" fill="none"/>
<rect x="14.500" y="17.500" width="15" height="12" fill="#fff" stroke="#7a7a7a" stroke-width="1"/>
<text x="17.500" y="27" font-size="9.800" fill="#333">%</text>
</g>
<text x="1031.4" y="313.8" font-size="13" fill="#4a4a4a" font-weight="bold" textLength="82" lengthAdjust="spacingAndGlyphs">Bottom 10 %...</text>
<rect x="1039.9" y="316" width="7.5" height="1" fill="#4a4a4a"/>
<g transform="translate(994 337)">
<rect x=".5" y=".5" width="27" height="24" fill="#fff" stroke="#808080" stroke-width="1"/>
<rect x="8" y="1" width="12" height="17.5" fill="#f3cd83"/>
<path d="M7.500 1v23M20.500 1v23M1 6.500h26M1 12.500h26M1 18.500h26" stroke="#bcbcbc" stroke-width="1" fill="none"/>
<path d="M13.500 3.500v11.500M10.300 6.800l3.200-3.400 3.200 3.400" stroke="#666" stroke-width="1.200" fill="none"/>
<rect x="14.500" y="17.500" width="15" height="12" fill="#fff" stroke="#7a7a7a" stroke-width="1"/>
<text x="18.800" y="28.300" font-size="12.500" fill="#333" font-style="italic" font-family="'Liberation Serif', serif">x</text><rect x="19.500" y="19.500" width="6" height="1" fill="#333"/>
</g>
<text x="1031.4" y="357.8" font-size="13" fill="#4a4a4a" font-weight="bold" textLength="94.5" lengthAdjust="spacingAndGlyphs">Above Average...</text>
<rect x="1031.4" y="360" width="8.5" height="1" fill="#4a4a4a"/>
<g transform="translate(994 381)">
<rect x=".5" y=".5" width="27" height="24" fill="#fff" stroke="#808080" stroke-width="1"/>
<rect x="8" y="7" width="12" height="17.5" fill="#f3cd83"/>
<path d="M7.500 1v23M20.500 1v23M1 6.500h26M1 12.500h26M1 18.500h26" stroke="#bcbcbc" stroke-width="1" fill="none"/>
<path d="M13.500 8.500v12.500M10.300 17.500l3.200 3.400 3.200-3.400" stroke="#666" stroke-width="1.200" fill="none"/>
<rect x="14.500" y="17.500" width="15" height="12" fill="#fff" stroke="#7a7a7a" stroke-width="1"/>
<text x="18.800" y="28.300" font-size="12.500" fill="#333" font-style="italic" font-family="'Liberation Serif', serif">x</text><rect x="19.500" y="19.500" width="6" height="1" fill="#333"/>
</g>
<text x="1031.4" y="401.8" font-size="13" fill="#4a4a4a" font-weight="bold" textLength="93.5" lengthAdjust="spacingAndGlyphs">Below Average...</text>
<rect x="1073.9" y="404" width="7" height="1" fill="#4a4a4a"/>
<rect x="986" y="417" width="173" height="1" fill="#e1e1e1"/>
<text x="1018.3" y="434.7" font-size="13" fill="#4a4a4a" textLength="67.3" lengthAdjust="spacingAndGlyphs">More Rules...</text>
<rect x="1018.3" y="437" width="10.5" height="1" fill="#4a4a4a"/>
</g>
<g id="annotations">
<rect x="60" y="4.8" width="53.2" height="25" fill="#f5f5f5"/>
<rect x="57.5" y="1.5" width="58" height="30.6" fill="none" stroke="#ed1c24" stroke-width="5"/>
<text x="17.2" y="22" font-size="13" fill="#fff" textLength="17.7" lengthAdjust="spacingAndGlyphs">File</text>
<text x="70.4" y="22" font-size="13" fill="#217346" textLength="32.5" lengthAdjust="spacingAndGlyphs">Home</text>
<text x="129.8" y="22" font-size="13" fill="#fff" textLength="29.1" lengthAdjust="spacingAndGlyphs">Insert</text>
<text x="186.3" y="22" font-size="13" fill="#fff" textLength="64.7" lengthAdjust="spacingAndGlyphs">Page Layout</text>
<text x="278.3" y="22" font-size="13" fill="#fff" textLength="48.4" lengthAdjust="spacingAndGlyphs">Formulas</text>
<text x="354.5" y="22" font-size="13" fill="#fff" textLength="23.7" lengthAdjust="spacingAndGlyphs">Data</text>
<text x="405.2" y="22" font-size="13" fill="#fff" textLength="36.7" lengthAdjust="spacingAndGlyphs">Review</text>
<text x="468.9" y="22" font-size="13" fill="#fff" textLength="24.7" lengthAdjust="spacingAndGlyphs">View</text>
<text x="521" y="22" font-size="13" fill="#fff" textLength="53" lengthAdjust="spacingAndGlyphs">Developer</text>
<text x="601" y="22" font-size="13" fill="#fff" textLength="25" lengthAdjust="spacingAndGlyphs">Help</text>
<text x="681.3" y="22" font-size="13" fill="#fff" textLength="149.7" lengthAdjust="spacingAndGlyphs">Tell me what you want to do</text>
<rect x="799.9" y="34.5" width="75.6" height="72.3" fill="none" stroke="#ed1c24" stroke-width="5"/>
<rect x="805.8" y="150.8" width="154.4" height="42.4" fill="none" stroke="#ed1c24" stroke-width="5"/>
<rect x="985.7" y="152.7" width="172.8" height="43.5" fill="none" stroke="#ed1c24" stroke-width="5"/>
</g>
</svg>
</body></html>
